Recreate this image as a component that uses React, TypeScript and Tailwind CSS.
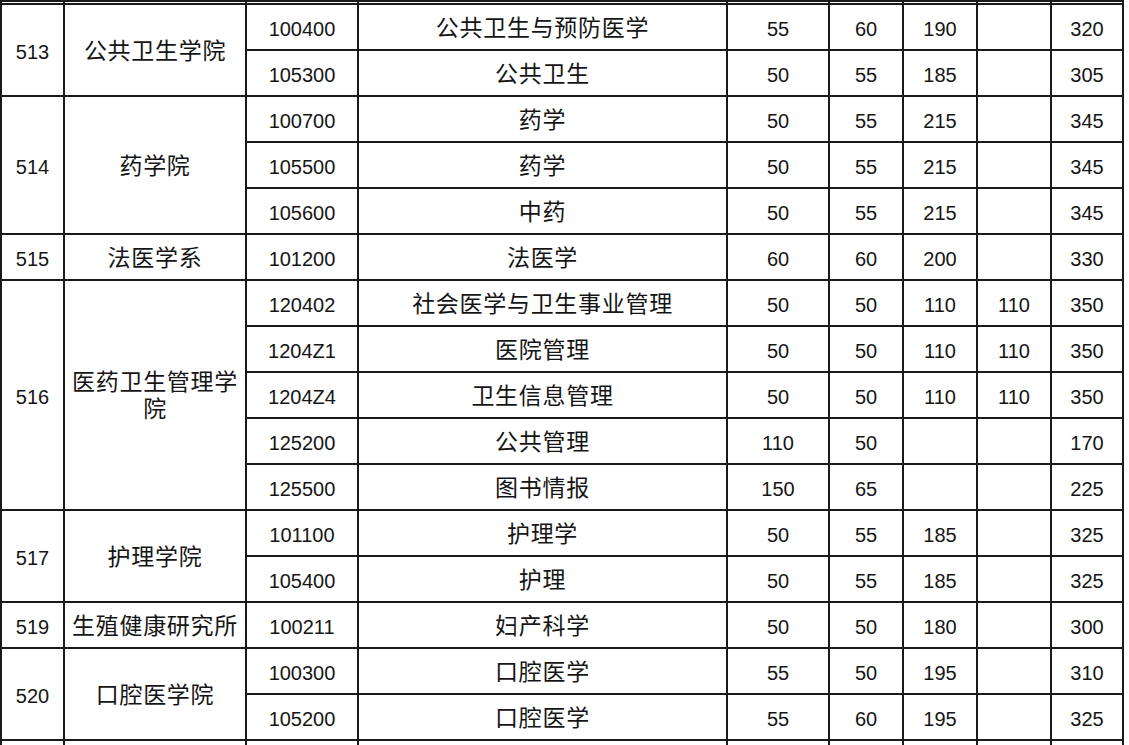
import React from 'react';

type Row = {
  code: string;
  major: string;
  vals: string[];
};

type Group = {
  id: string;
  name: string;
  rows: Row[];
};

const groups: Group[] = [
  {
    id: '513',
    name: '公共卫生学院',
    rows: [
      { code: '100400', major: '公共卫生与预防医学', vals: ['55', '60', '190', '', '320'] },
      { code: '105300', major: '公共卫生', vals: ['50', '55', '185', '', '305'] },
    ],
  },
  {
    id: '514',
    name: '药学院',
    rows: [
      { code: '100700', major: '药学', vals: ['50', '55', '215', '', '345'] },
      { code: '105500', major: '药学', vals: ['50', '55', '215', '', '345'] },
      { code: '105600', major: '中药', vals: ['50', '55', '215', '', '345'] },
    ],
  },
  {
    id: '515',
    name: '法医学系',
    rows: [{ code: '101200', major: '法医学', vals: ['60', '60', '200', '', '330'] }],
  },
  {
    id: '516',
    name: '医药卫生管理学院',
    rows: [
      { code: '120402', major: '社会医学与卫生事业管理', vals: ['50', '50', '110', '110', '350'] },
      { code: '1204Z1', major: '医院管理', vals: ['50', '50', '110', '110', '350'] },
      { code: '1204Z4', major: '卫生信息管理', vals: ['50', '50', '110', '110', '350'] },
      { code: '125200', major: '公共管理', vals: ['110', '50', '', '', '170'] },
      { code: '125500', major: '图书情报', vals: ['150', '65', '', '', '225'] },
    ],
  },
  {
    id: '517',
    name: '护理学院',
    rows: [
      { code: '101100', major: '护理学', vals: ['50', '55', '185', '', '325'] },
      { code: '105400', major: '护理', vals: ['50', '55', '185', '', '325'] },
    ],
  },
  {
    id: '519',
    name: '生殖健康研究所',
    rows: [{ code: '100211', major: '妇产科学', vals: ['50', '50', '180', '', '300'] }],
  },
  {
    id: '520',
    name: '口腔医学院',
    rows: [
      { code: '100300', major: '口腔医学', vals: ['55', '50', '195', '', '310'] },
      { code: '105200', major: '口腔医学', vals: ['55', '60', '195', '', '325'] },
    ],
  },
];

const widths = [63, 182, 112, 369, 102, 74, 74, 74, 72];

const cell = 'border-2 border-[#1a1a1a] text-center align-middle p-0';
const num = 'text-[20px] pt-[3px]';
const zh = 'text-[23px] leading-[27px] tracking-[0.7px] pt-[2px]';

// cropped rows at top/bottom edge of the screenshot
const EdgeRow = ({ h }: { h: string }) => (
  <tr className={h}>
    {widths.map((_, i) => (
      <td key={i} className={cell} />
    ))}
  </tr>
);

export default function App() {
  return (
    <div
      className="w-[1129px] h-[745px] overflow-hidden bg-white text-[#151515]"
      style={{ fontFamily: '"Liberation Sans", "Noto Sans CJK SC", sans-serif' }}
    >
      <table className="table-fixed border-collapse w-[1124px]">
        <colgroup>
          {widths.map((w, i) => (
            <col key={i} style={{ width: w }} />
          ))}
        </colgroup>
        <tbody>
          <EdgeRow h="h-[3px]" />
          {groups.map((g) =>
            g.rows.map((r, i) => (
              <tr key={g.id + r.code} className="h-[46px]">
                {i === 0 && (
                  <>
                    <td rowSpan={g.rows.length} className={`${cell} ${num}`}>
                      {g.id}
                    </td>
                    <td rowSpan={g.rows.length} className={`${cell} ${zh} px-1`}>
                      {g.name}
                    </td>
                  </>
                )}
                <td className={`${cell} ${num}`}>{r.code}</td>
                <td className={`${cell} ${zh}`}>{r.major}</td>
                {r.vals.map((v, j) => (
                  <td key={j} className={`${cell} ${num}`}>
                    {v}
                  </td>
                ))}
              </tr>
            ))
          )}
          <EdgeRow h="h-[10px]" />
        </tbody>
      </table>
    </div>
  );
}
